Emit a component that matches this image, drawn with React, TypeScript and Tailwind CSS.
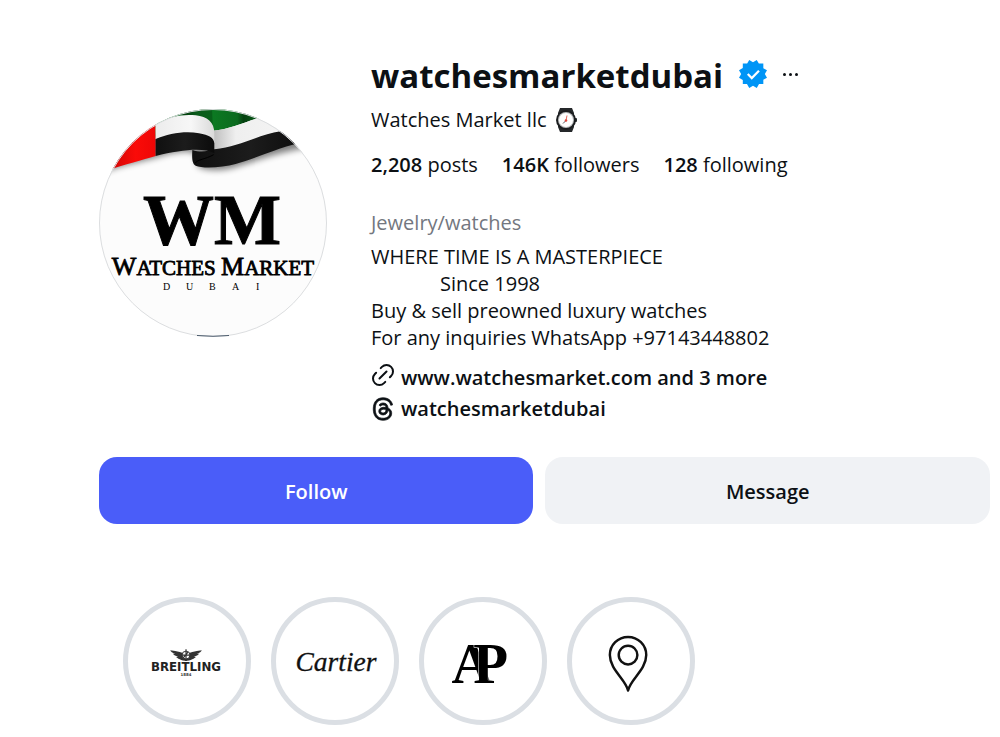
import React from 'react';
import { FaThreads } from 'react-icons/fa6';

const stats = [
  { value: '2,208', label: 'posts' },
  { value: '146K', label: 'followers' },
  { value: '128', label: 'following' },
];

const Avatar = () => (
  <svg viewBox="0 0 228 228" className="w-full h-auto" role="img" aria-label="Watches Market Dubai">
    <defs>
      <clipPath id="avatar-clip">
        <circle cx="114" cy="114" r="114" />
      </clipPath>
      <linearGradient id="red" x1="0" x2="1">
        <stop offset="0" stopColor="#c80505" />
        <stop offset="0.6" stopColor="#fa0b08" />
        <stop offset="1" stopColor="#ee0606" />
      </linearGradient>
      <linearGradient id="green" x1="0" x2="1">
        <stop offset="0" stopColor="#0c7a22" />
        <stop offset="0.4" stopColor="#0b6a1f" />
        <stop offset="0.5" stopColor="#04400f" />
        <stop offset="0.7" stopColor="#0a5a1a" />
        <stop offset="1" stopColor="#08611a" />
      </linearGradient>
      <linearGradient id="white-left" x1="0" x2="1">
        <stop offset="0" stopColor="#ececec" />
        <stop offset="0.6" stopColor="#f7f7f7" />
        <stop offset="1" stopColor="#dadada" />
      </linearGradient>
      <linearGradient id="white-right" x1="0" x2="1">
        <stop offset="0" stopColor="#bdbdbd" />
        <stop offset="0.3" stopColor="#efefef" />
        <stop offset="1" stopColor="#f4f4f4" />
      </linearGradient>
      <linearGradient id="black" x1="0" x2="1">
        <stop offset="0" stopColor="#101010" />
        <stop offset="0.5" stopColor="#1c1c1c" />
        <stop offset="1" stopColor="#0b0b0b" />
      </linearGradient>
      <filter id="shadow" x="-10%" y="-20%" width="120%" height="150%">
        <feGaussianBlur stdDeviation="9" />
      </filter>
    </defs>
    <g clipPath="url(#avatar-clip)">
      <rect width="228" height="228" fill="#fcfcfc" />
      <g transform="translate(-10 -9) scale(0.3333)">
        <path
          d="M30 222C90 198 150 186 205 172C250 158 285 150 320 160L325 198C345 214 400 212 430 204C500 184 560 158 660 142L640 100H40Z"
          fill="#000"
          opacity="0.5"
          filter="url(#shadow)"
        />
        <path d="M200 0V168C160 180 110 193 50 212V0Z" fill="url(#red)" />
        <path d="M200 0H375V110H200Z" fill="url(#green)" />
        <path d="M368 0H560V60L505 55C460 70 420 88 372 92Z" fill="url(#green)" />
        <path d="M372 92C420 88 460 70 505 55L600 40V100L575 94C510 106 440 150 372 148Z" fill="url(#white-right)" />
        <path
          d="M310 150C335 158 355 154 377 148C450 140 510 104 575 94L660 80V122C570 140 500 176 440 192C400 203 340 206 320 197C308 192 309 170 310 150Z"
          fill="url(#black)"
        />
        <path d="M200 72C240 50 280 42 320 46C355 50 376 66 376 100V130C360 96 260 98 200 118Z" fill="url(#white-left)" />
        <path d="M200 117C240 100 290 92 330 100C360 106 374 112 376 130V160C345 142 280 148 200 168Z" fill="url(#black)" />
        <path d="M318 190C325 178 350 178 374 164" fill="none" stroke="#000" strokeWidth="3" />
      </g>
      <g fontFamily="'Liberation Serif', serif" fill="#000">
        <text x="44" y="135" fontSize="71" fontWeight="700" stroke="#000" strokeWidth="1">WM</text>
        <text x="114" y="166" textAnchor="middle" fontSize="21" stroke="#000" strokeWidth="0.8">
          <tspan fontSize="26">W</tspan>ATCHES <tspan fontSize="26">M</tspan>ARKET
        </text>
        <text x="64 87 110 133 157" y="181" fontSize="10">DUBAI</text>
      </g>
    </g>
    <circle cx="114" cy="114" r="113.5" fill="none" stroke="#dcdee0" />
    <path d="M98 226.500Q114 228 130 226.500" fill="none" stroke="#4a5a6b" />
  </svg>
);

const VerifiedBadge = () => (
  <svg viewBox="0 0 40 40" className="size-7 shrink-0" fill="#0095f6" role="img" aria-label="Verified">
    <path
      fillRule="evenodd"
      d="M19.998 3.094 14.638 0l-2.972 5.15H5.432v6.354L0 14.64 3.094 20 0 25.359l5.432 3.137v5.905h5.975L14.638 40l5.36-3.094L25.358 40l3.232-5.6h6.162v-6.01L40 25.359 36.905 20 40 14.641l-5.248-3.03v-6.46h-6.419L25.358 0l-5.36 3.094Zm7.415 11.225 2.254 2.287-11.43 11.5-6.835-6.93 2.244-2.258 4.587 4.581 9.18-9.18Z"
    />
  </svg>
);

const WatchIcon = () => (
  <svg viewBox="0 0 22 24" className="w-[22px] h-6 shrink-0" role="img" aria-label="watch">
    <path d="M5 0H17L19 5V19L17 24H5L3 19V5Z" fill="#25282a" />
    <rect x="19" y="10" width="3" height="4" rx="1" fill="#25282a" />
    <circle cx="11" cy="12" r="10" fill="#1b1d1f" />
    <circle cx="11" cy="12" r="8" fill="#b9bbbd" />
    <circle cx="11" cy="12" r="7" fill="#fff" />
    <path d="M11 12.500L12 7.500" stroke="#e0685d" />
    <path d="M11 12.500L8 15.500" stroke="#55585c" />
    <circle cx="11" cy="12.500" r="1.300" fill="#e0483d" />
  </svg>
);

const LinkIcon = () => (
  <svg viewBox="0 0 24 24" className="size-6 mb-1 shrink-0" fill="none" stroke="currentColor" strokeWidth="2" strokeLinecap="round" aria-hidden="true">
    <path d="m9.726 5.123 1.228-1.228a6.47 6.47 0 0 1 9.15 9.152l-1.227 1.227m-4.603 4.603-1.228 1.228a6.47 6.47 0 0 1-9.15-9.152l1.227-1.227" />
    <path d="M8.471 15.529 15.529 8.471" />
  </svg>
);

const BreitlingLogo = () => (
  <svg viewBox="0 0 120 120" className="w-full">
    <g fill="#333">
      <path d="M43 49C50 50 56 51 60 54V60C54 60 50 57 49 56L51 55.500C48 55 46 53 45.500 52.500L48 52.400C45 51.500 43.500 50.500 43 49Z" />
      <path d="M75 49C68 50 62 51 58 54V60C64 60 68 57 69 56L67 55.500C70 55 72 53 72.500 52.500L70 52.400C73 51.500 74.500 50.500 75 49Z" />
      <circle cx="59" cy="54" r="4" fill="#fff" stroke="#333" />
      <path d="M59 48V59M55 54H63M56 57L61 51" stroke="#333" strokeWidth="1.200" />
    </g>
    <text x="59" y="70" textAnchor="middle" fontSize="12" fontWeight="700" fontFamily="'DejaVu Sans', sans-serif" fill="#222">BREITLING</text>
    <text x="59" y="75" textAnchor="middle" fontSize="4" fontWeight="700" fontFamily="'DejaVu Sans', sans-serif" fill="#333">1884</text>
  </svg>
);

const CartierLogo = () => (
  <svg viewBox="0 0 120 120" className="w-full">
    <text x="61" y="70" textAnchor="middle" fontSize="28" fontStyle="italic" fontFamily="'Liberation Serif', serif" fill="#111" stroke="#111" strokeWidth="0.3">Cartier</text>
  </svg>
);

const ApLogo = () => (
  <svg viewBox="0 0 120 120" className="w-full">
    <g fontSize="58" fontWeight="700" fontFamily="'Liberation Serif', serif" fill="#000">
      <text x="28" y="82">A</text>
      <text x="50" y="82" stroke="#fff" strokeWidth="1" paintOrder="stroke">P</text>
    </g>
  </svg>
);

const PinIcon = () => (
  <svg viewBox="0 0 120 120" className="w-full" fill="none" stroke="#111" strokeWidth="2.500" strokeLinejoin="round">
    <path d="M57 90C55 79 38.500 69 38.500 54A18.500 18.500 0 0 1 75.500 54C75.500 69 59 79 57 90Z" />
    <circle cx="57" cy="54" r="9.500" />
  </svg>
);

const highlights = [
  { name: 'Breitling', Logo: BreitlingLogo },
  { name: 'Cartier', Logo: CartierLogo },
  { name: 'Audemars Piguet', Logo: ApLogo },
  { name: 'Location', Logo: PinIcon },
];

const App: React.FC = () => {
  return (
    <main className="min-h-screen bg-white pt-[54px] pl-[99px] pr-[10px] pb-3 font-['Open_Sans',sans-serif] text-xl leading-[27px] text-[#0c1014]">
      <header className="flex items-start gap-11">
        <div className="w-[228px] shrink-0 mt-[55px]">
          <Avatar />
        </div>

        <div className="flex-1 min-w-0">
          <div className="flex items-center">
            <h1 className="text-[33px] leading-[44px] font-bold">watchesmarketdubai</h1>
            <span className="ml-4 mb-1"><VerifiedBadge /></span>
            <button aria-label="Options" className="ml-4 mb-1 flex gap-[3px]">
              <span className="size-[3px] rounded-full bg-[#0c1014]" />
              <span className="size-[3px] rounded-full bg-[#0c1014]" />
              <span className="size-[3px] rounded-full bg-[#0c1014]" />
            </button>
          </div>

          <div className="mt-2 flex items-center gap-2">
            <span>Watches Market llc</span>
            <WatchIcon />
          </div>

          <ul className="mt-[18px] flex gap-6">
            {stats.map((stat) => (
              <li key={stat.label}>
                <span className="font-semibold">{stat.value}</span> {stat.label}
              </li>
            ))}
          </ul>

          <p className="mt-[31px] text-[#737780]">Jewelry/watches</p>
          <div className="mt-[7px]">
            <p>WHERE TIME IS A MASTERPIECE</p>
            <p className="pl-[69px]">Since 1998</p>
            <p>Buy &amp; sell preowned luxury watches</p>
            <p>For any inquiries WhatsApp +97143448802</p>
          </div>

          <a href="#links" className="mt-3 flex w-fit items-center gap-1.5 font-semibold">
            <LinkIcon />
            <span>www.watchesmarket.com and 3 more</span>
          </a>
          <a href="#threads" className="mt-1 flex w-fit items-center gap-1.5 font-semibold">
            <FaThreads className="size-6" stroke="currentColor" strokeWidth="16" />
            <span>watchesmarketdubai</span>
          </a>
        </div>
      </header>

      <div className="mt-[35px] grid grid-cols-[434fr_444fr] gap-3 font-semibold">
        <button className="h-[67px] rounded-[18px] bg-[#4a5df9] pt-0.5 text-white">Follow</button>
        <button className="h-[67px] rounded-[18px] bg-[#f0f2f5] pt-0.5">Message</button>
      </div>

      <div className="mt-[73px] ml-6 flex gap-5">
        {highlights.map(({ name, Logo }) => (
          <button key={name} aria-label={name} className="flex size-32 items-center rounded-full border-[5px] border-[#dbdfe4]">
            <Logo />
          </button>
        ))}
      </div>
    </main>
  );
};

export default App;
